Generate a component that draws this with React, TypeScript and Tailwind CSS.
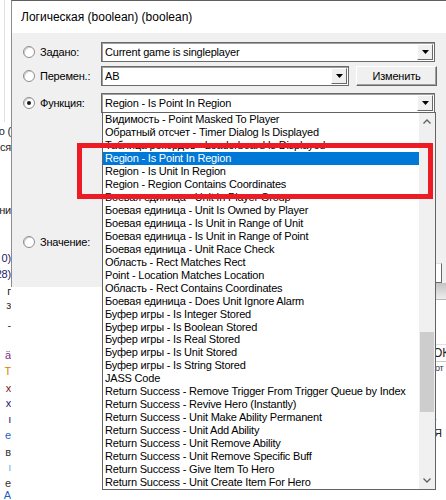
import React from 'react'

const items = [
  'Видимость - Point Masked To Player',
  'Обратный отсчет - Timer Dialog Is Displayed',
  'Таблица рекордов - Leaderboard Is Displayed',
  'Region - Is Point In Region',
  'Region - Is Unit In Region',
  'Region - Region Contains Coordinates',
  'Боевая единица - Unit In Player Group',
  'Боевая единица - Unit Is Owned by Player',
  'Боевая единица - Is Unit in Range of Unit',
  'Боевая единица - Is Unit in Range of Point',
  'Боевая единица - Unit Race Check',
  'Область - Rect Matches Rect',
  'Point - Location Matches Location',
  'Область - Rect Contains Coordinates',
  'Боевая единица - Does Unit Ignore Alarm',
  'Буфер игры - Is Integer Stored',
  'Буфер игры - Is Boolean Stored',
  'Буфер игры - Is Real Stored',
  'Буфер игры - Is Unit Stored',
  'Буфер игры - Is String Stored',
  'JASS Code',
  'Return Success - Remove Trigger From Trigger Queue by Index',
  'Return Success - Revive Hero (Instantly)',
  'Return Success - Unit Make Ability Permanent',
  'Return Success - Unit Add Ability',
  'Return Success - Unit Remove Ability',
  'Return Success - Unit Remove Specific Buff',
  'Return Success - Give Item To Hero',
  'Return Success - Unit Create Item For Hero',
]

const selected = 3

// обрывки текста окна позади диалога
const fragments = [
  { top: 'top-[125px]', text: 'го (', color: 'text-[#222]' },
  { top: 'top-[141px]', text: 'еся', color: 'text-[#222]' },
  { top: 'top-[204px]', text: 'ни', color: 'text-[#222]' },
  { top: 'top-[252px]', text: '0)', color: 'text-[#1a1a6a]' },
  { top: 'top-[268px]', text: '28)', color: 'text-[#1a1a6a]' },
  { top: 'top-[285px]', text: 'г', color: 'text-[#222]' },
  { top: 'top-[299px]', text: 'з', color: 'text-[#333]' },
  { top: 'top-[319px]', text: '-', color: 'text-[#333]' },
  { top: 'top-[349px]', text: 'ä', color: 'text-[#7b2d8b]' },
  { top: 'top-[365px]', text: 'Т', color: 'text-[#d08a00]' },
  { top: 'top-[382px]', text: 'x', color: 'text-[#7a1a1a]' },
  { top: 'top-[397px]', text: 'x', color: 'text-[#1a1a6a]' },
  { top: 'top-[413px]', text: 'ı', color: 'text-[#1a1a6a]' },
  { top: 'top-[429px]', text: 'e', color: 'text-[#1f5fbf]' },
  { top: 'top-[446px]', text: 'в', color: 'text-[#333]' },
  { top: 'top-[461px]', text: 'ı', color: 'text-[#6ab0e0]' },
  { top: 'top-[477px]', text: 'е', color: 'text-[#333]' },
  { top: 'top-[489px]', text: 'А', color: 'text-[#1f5fbf]' },
]

function Radio({ checked }: { checked?: boolean }) {
  return (
    <span className="w-[12px] h-[12px] rounded-full border border-[#8d8d8d] bg-white flex items-center justify-center shrink-0 shadow-[inset_1px_1px_0_#d0d0d0]">
      {checked && <span className="w-[4px] h-[4px] rounded-full bg-[#1a1a1a]" />}
    </span>
  )
}

function Arrow() {
  return (
    <span className="w-[16px] h-[16px] mr-px bg-[#f0f0f0] border border-t-white border-l-white border-r-[#696969] border-b-[#696969] flex items-center justify-center shrink-0">
      <svg width="7" height="4" viewBox="0 0 7 4">
        <path d="M0 0h7L3.5 4z" fill="#000" />
      </svg>
    </span>
  )
}

function Combo({ text, width }: { text: string; width: string }) {
  return (
    <div className={`h-[20px] ${width} flex items-center bg-white border border-[#6a6a6a] shadow-[inset_1px_1px_0_#a0a0a0]`}>
      <span className="flex-1 pl-[3px] whitespace-nowrap overflow-hidden">{text}</span>
      <Arrow />
    </div>
  )
}

function Chevron({ up }: { up?: boolean }) {
  return (
    <svg width="8" height="5" viewBox="0 0 8 5">
      <path d={up ? 'M0.5 4.5L4 1l3.5 3.5' : 'M0.5 0.5L4 4l3.5-3.5'} fill="none" stroke="#606060" strokeWidth="1.3" />
    </svg>
  )
}

export default function App() {
  return (
    <div
      className="relative w-[446px] h-[500px] overflow-hidden bg-white flex text-[11px] tracking-[-0.2px] text-black"
      style={{ fontFamily: '"Liberation Sans", Arial, sans-serif' }}
    >
      <div className="relative w-[11px] h-full shrink-0 overflow-hidden">
        <div className="absolute left-[4px] top-0 h-[122px] w-px bg-[#e2e2e2]" />
        {fragments.map((f, i) => (
          <span key={i} className={`absolute right-0 ${f.top} ${f.color} leading-[13px] whitespace-nowrap`}>
            {f.text}
          </span>
        ))}
      </div>

      <div className="flex-1 flex flex-col">
        <div className="h-[287px] flex flex-col border-l border-t border-l-[#8c8c8c] border-t-[#5f5f5f]">
          <div className="h-[32px] bg-white flex items-center pl-[9px] text-[12px] tracking-normal">
            Логическая (boolean) (boolean)
          </div>
          <div className="flex-1 bg-[#f0f0f0] flex flex-col pt-[9px] pl-[11px]">
            <div className="flex items-center h-[20px]">
              <div className="w-[78px] flex items-center gap-[5px]">
                <Radio />
                <span>Задано:</span>
              </div>
              <Combo text="Current game is singleplayer" width="w-[334px]" />
            </div>
            <div className="flex items-center h-[20px] mt-[4px]">
              <div className="w-[78px] flex items-center gap-[5px]">
                <Radio />
                <span>Перемен.:</span>
              </div>
              <Combo text="AB" width="w-[248px]" />
              <button className="ml-[7px] w-[81px] h-[20px] bg-[#f0f0f0] border border-t-white border-l-white border-r-[#696969] border-b-[#696969] shadow-[inset_-1px_-1px_0_#a0a0a0] flex items-center justify-center">
                Изменить
              </button>
            </div>
            <div className="flex items-center h-[20px] mt-[7px]">
              <div className="w-[78px] flex items-center gap-[5px]">
                <Radio checked />
                <span>Функция:</span>
              </div>
              <Combo text="Region - Is Point In Region" width="w-[334px]" />
            </div>
            <div className="flex items-center h-[20px] mt-[119px]">
              <div className="w-[78px] flex items-center gap-[5px]">
                <Radio />
                <span>Значение:</span>
              </div>
            </div>
            <div className="flex justify-end pr-[4px] mt-[11px]">
              <button className="w-[75px] h-[20px] bg-white border border-t-[#e0e0e0] border-l-[#e0e0e0] border-r-[#696969] border-b-[#696969]">
                OK
              </button>
            </div>
          </div>
        </div>
        <div className="flex-1 bg-white" />
      </div>

      {/* окно справа, позади списка */}
      <div className="absolute left-[380px] top-[283px] right-0 bottom-0 bg-white flex flex-col">
        <div className="h-[17px] bg-gradient-to-b from-[#c4c4c4] to-[#ededed] border-b border-[#b8b8b8]" />
        <div className="h-[44px]" />
        <div className="h-[18px] border-t border-[#e0e0e0] border-b border-b-[#c8c8c8] flex items-center pl-[53px] text-[12px] text-[#222] tracking-normal">
          ОК
        </div>
        <div className="pl-[55px] text-[9px] leading-[12px] text-[#333]">от</div>
        <div className="h-[34px]" />
        <div className="pl-[54px] text-[11px] text-[#222]">
          <span className="text-[#1f5fbf]">.</span> Я
        </div>
      </div>

      {/* выпадающий список */}
      <div className="absolute left-[102px] top-[112px] w-[334px] h-[378px] bg-white border border-[#646464] flex">
        <div className="flex-1 flex flex-col">
          {items.map((t, i) => (
            <div
              key={i}
              className={`h-[13px] leading-[13px] pl-[2px] whitespace-nowrap overflow-hidden ${
                i === selected ? 'bg-[#0078d7] text-white' : ''
              }`}
            >
              {t}
            </div>
          ))}
        </div>
        <div className="w-[16px] bg-[#f0f0f0] flex flex-col items-center">
          <div className="h-[17px] w-full flex items-center justify-center">
            <Chevron up />
          </div>
          <div className="h-[202px]" />
          <div className="h-[80px] w-[14px] bg-[#cdcdcd]" />
          <div className="flex-1" />
          <div className="h-[17px] w-full flex items-center justify-center">
            <Chevron />
          </div>
        </div>
      </div>

      {/* красная рамка-выделение */}
      <div className="absolute left-[77px] top-[143px] w-[356px] h-[56px] border-[5px] border-[#ed1c24]" />
    </div>
  )
}
